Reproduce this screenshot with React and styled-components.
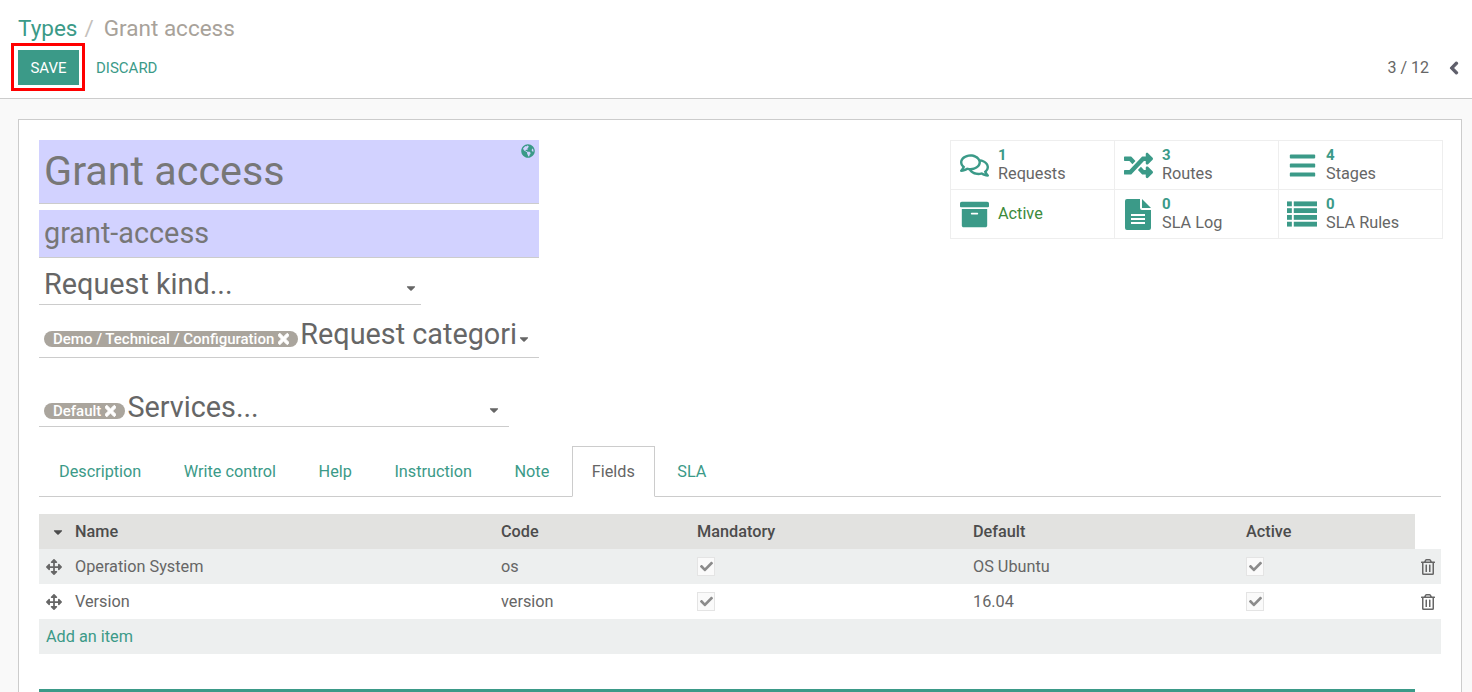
import React from "react"
import styled, { createGlobalStyle } from "styled-components"
import {
  FaRegComments,
  FaRandom,
  FaBars,
  FaArchive,
  FaTimes,
  FaCaretDown,
  FaArrowsAlt,
  FaCheck,
  FaRegTrashAlt,
  FaGlobeAmericas,
  FaChevronLeft,
} from "react-icons/fa"

const teal = "#3b9a88"
const grey = "#666"

const GlobalStyle = createGlobalStyle`
html, body {
  margin: 0;
  height: 692px;
  overflow: hidden;
  background: #f9f9f9;
  font-family: Roboto, "Liberation Sans", sans-serif;
  color: ${grey};
}
* { box-sizing: border-box; }
`

const ControlPanel = styled.header`
position: relative;
height: 99px;
background: white;
border-bottom: 1px solid #ccc;
padding: 12px 11px 0 18px;
`

const Breadcrumb = styled.div`
height: 38px;
padding-bottom: 7px;
display: flex;
align-items: center;
font-size: 22.5px;
line-height: 28px;
color: #a8a29a;
`

const Crumb = styled.span`
color: ${teal};
`

const Slash = styled.span`
margin: 0 10px 0 7px;
color: #c4c0bb;
`

const Toolbar = styled.div`
display: flex;
align-items: center;
justify-content: space-between;
`

const Actions = styled.div`
position: relative;
display: flex;
align-items: center;
`

const SaveButton = styled.button`
width: 61px;
height: 35px;
background: ${teal};
border: 0;
padding: 0;
color: white;
font: 15px Roboto, sans-serif;
`

const Highlight = styled.span`
position: absolute;
left: -7px;
top: -7px;
width: 74px;
height: 48px;
border: 3px solid #f00;
`

const DiscardButton = styled.button`
margin-left: 17px;
background: none;
border: 0;
padding: 0;
color: ${teal};
font: 15px Roboto, sans-serif;
`

const Pager = styled.div`
display: flex;
align-items: center;
gap: 18px;
font-size: 16px;
color: ${grey};

svg {
  font-size: 14px;
  color: #5f5f6b;
  stroke: currentColor;
  stroke-width: 40px;
}
`

const Sheet = styled.main`
margin: 20px 10px 0 18px;
height: 600px;
background: white;
border: 1px solid #ccc;
padding: 20px;
overflow: hidden;
`

const Top = styled.div`
display: flex;
justify-content: space-between;
align-items: flex-start;
margin-right: -2px;
`

const FormColumn = styled.div`
width: 500px;
`

const TitleField = styled.div`
position: relative;
height: 64px;
background: #d2d2ff;
border-bottom: 1px solid #ccc;
padding-left: 5px;
font-size: 41.3px;
line-height: 63px;
color: #777;
`

const GlobeIcon = styled(FaGlobeAmericas)`
position: absolute;
right: 4px;
top: 4px;
font-size: 14px;
color: ${teal};
`

const SlugField = styled.div`
height: 48px;
margin-top: 6px;
background: #d2d2ff;
border-bottom: 1px solid #ccc;
padding-left: 5px;
font-size: 28.8px;
line-height: 46px;
color: #777;
`

const SelectField = styled.div`
display: flex;
align-items: flex-end;
width: ${p => p.$width}px;
height: ${p => p.$height}px;
margin-top: ${p => p.$top}px;
border-bottom: 1px solid #ccc;
padding-left: 5px;
`

const Placeholder = styled.span`
flex: 1;
margin-bottom: ${p => p.$lift}px;
font-size: 28.8px;
line-height: 40px;
color: ${grey};
white-space: nowrap;
`

const Tag = styled.span`
display: inline-flex;
align-items: center;
gap: 4px;
height: 16px;
margin: 0 2px ${p => p.$lift}px 0;
padding: 0 9px;
border-radius: 8px;
background: #aaa59d;
color: white;
font-size: 15px;
font-weight: 500;
white-space: nowrap;

svg {
  width: 11px;
  height: 16px;
  stroke: currentColor;
  stroke-width: 30px;
}
`

const Caret = styled(FaCaretDown)`
flex: none;
font-size: 14px;
margin: 0 ${p => p.$gap}px ${p => p.$lift}px 0;
color: #666;
`

const ButtonBox = styled.div`
display: grid;
grid-template-columns: repeat(3, 164px);
grid-auto-rows: 49px;
width: 493px;
border-top: 1px solid #eee;
border-left: 1px solid #eee;
`

const StatButton = styled.div`
display: flex;
align-items: center;
border-right: 1px solid #eee;
border-bottom: 1px solid #eee;
padding-left: 8px;
`

const StatIcon = styled.span`
display: flex;
justify-content: center;
width: 30px;
margin-right: 9px;
font-size: 29px;
color: ${teal};
`

const StatText = styled.div`
font-size: 16.25px;
line-height: 20px;
color: ${p => (p.$active ? "#3c8a3c" : grey)};
`

const StatValue = styled.div`
font-size: 15px;
line-height: 16px;
margin-bottom: 1px;
font-weight: 700;
color: ${teal};
`

const Tabs = styled.nav`
display: flex;
height: 51px;
margin-top: 19px;
border-bottom: 1px solid #ccc;
`

const Tab = styled.a`
height: ${p => (p.$active ? 51 : 50)}px;
margin-right: 2.5px;
padding: 0 19px;
border: 1px solid ${p => (p.$active ? "#ccc" : "transparent")};
border-bottom: ${p => (p.$active ? "1px solid white" : "0")};
background: white;
font-size: 16.25px;
line-height: 49px;
color: ${p => (p.$active ? grey : teal)};
`

const Table = styled.div`
margin-top: 17px;
font-size: 16.25px;
`

const Row = styled.div`
display: grid;
grid-template-columns: 36px 426px 196px 276px 273px 1fr 26px;
align-items: center;
height: 35px;
background: ${p => (p.$shade ? "#edefef" : "white")};
color: ${grey};
`

const HeadRow = styled(Row)`
margin-right: 26px;
grid-template-columns: 36px 426px 196px 276px 273px 1fr;
background: #e2e2e0;
font-weight: 500;
color: #4c4c4c;
`

const SortCaret = styled(FaCaretDown)`
justify-self: center;
margin-left: 1px;
font-size: 14px;
color: #4c4c4c;
`

const DragHandle = styled(FaArrowsAlt)`
margin-left: 7px;
font-size: 16px;
color: #666;
`

const Check = styled.span`
display: flex;
align-items: center;
justify-content: center;
width: 18px;
height: 19px;
background: #fafafa;
border: 1px solid #e4e4e4;
font-size: 13px;
color: #8b8b8b;
`

const TrashIcon = styled(FaRegTrashAlt)`
justify-self: center;
font-size: 16px;
color: #666;
`

const AddRow = styled(Row)`
display: block;
padding-left: 7px;
line-height: 35px;
color: ${teal};
`

const Chatter = styled.div`
height: 6px;
margin: 35px 26px 0 0;
background: ${teal};
`

const DocIcon = () => (
  <svg width="26" height="31" viewBox="0 0 26 31" fill="currentColor">
    <path
      fillRule="evenodd"
      d="M2 0H15V9Q15 11 17 11H26V29Q26 31 24 31H2Q0 31 0 29V2Q0 0 2 0ZM6 15V17H20V15ZM6 19V21H20V19ZM6 23V25H20V23Z"
    />
    <path d="M17 0L26 9H17Z" />
  </svg>
)

const ListIcon = () => (
  <svg width="31" height="26" viewBox="0 0 31 26" fill="currentColor">
    {[0, 7, 14, 21].map(y => (
      <g key={y}>
        <rect x="0" y={y} width="5" height="5" />
        <rect x="7" y={y} width="24" height="5" />
      </g>
    ))}
  </svg>
)

const stats = [
  { icon: <FaRegComments />, value: 1, label: "Requests" },
  { icon: <FaRandom />, value: 3, label: "Routes" },
  { icon: <FaBars />, value: 4, label: "Stages" },
  { icon: <FaArchive />, label: "Active", active: true },
  { icon: <DocIcon />, value: 0, label: "SLA Log" },
  { icon: <ListIcon />, value: 0, label: "SLA Rules" },
]

const tabs = ["Description", "Write control", "Help", "Instruction", "Note", "Fields", "SLA"]

const fields = [
  { name: "Operation System", code: "os", def: "OS Ubuntu" },
  { name: "Version", code: "version", def: "16.04" },
]

const App = () => (
  <>
    <GlobalStyle />
    <ControlPanel>
      <Breadcrumb>
        <Crumb>Types</Crumb>
        <Slash>/</Slash>
        Grant access
      </Breadcrumb>
      <Toolbar>
        <Actions>
          <SaveButton>SAVE</SaveButton>
          <Highlight />
          <DiscardButton>DISCARD</DiscardButton>
        </Actions>
        <Pager>
          3 / 12
          <FaChevronLeft />
        </Pager>
      </Toolbar>
    </ControlPanel>
    <Sheet>
      <Top>
        <FormColumn>
          <TitleField>
            Grant access
            <GlobeIcon />
          </TitleField>
          <SlugField>grant-access</SlugField>
          <SelectField $width={382} $height={47} $top={0}>
            <Placeholder $lift={0}>Request kind...</Placeholder>
            <Caret $gap={3} $lift={9} />
          </SelectField>
          <SelectField $width={500} $height={53} $top={0}>
            <Tag $lift={10}>
              Demo / Technical / Configuration
              <FaTimes />
            </Tag>
            <Placeholder $lift={3}>Request categori</Placeholder>
            <Caret $gap={9} $lift={11} />
          </SelectField>
          <SelectField $width={470} $height={54} $top={15}>
            <Tag $lift={7}>
              Default
              <FaTimes />
            </Tag>
            <Placeholder $lift={-1}>Services...</Placeholder>
            <Caret $gap={8} $lift={9} />
          </SelectField>
        </FormColumn>
        <ButtonBox>
          {stats.map(stat => (
            <StatButton key={stat.label}>
              <StatIcon>{stat.icon}</StatIcon>
              <StatText $active={stat.active}>
                {stat.value !== undefined && <StatValue>{stat.value}</StatValue>}
                {stat.label}
              </StatText>
            </StatButton>
          ))}
        </ButtonBox>
      </Top>
      <Tabs>
        {tabs.map(tab => (
          <Tab key={tab} $active={tab === "Fields"}>{tab}</Tab>
        ))}
      </Tabs>
      <Table>
        <HeadRow>
          <SortCaret />
          <span>Name</span>
          <span>Code</span>
          <span>Mandatory</span>
          <span>Default</span>
          <span>Active</span>
        </HeadRow>
        {fields.map((field, i) => (
          <Row key={field.code} $shade={i === 0}>
            <DragHandle />
            <span>{field.name}</span>
            <span>{field.code}</span>
            <Check><FaCheck /></Check>
            <span>{field.def}</span>
            <Check><FaCheck /></Check>
            <TrashIcon />
          </Row>
        ))}
        <AddRow $shade>Add an item</AddRow>
      </Table>
      <Chatter />
    </Sheet>
  </>
)

export default App
